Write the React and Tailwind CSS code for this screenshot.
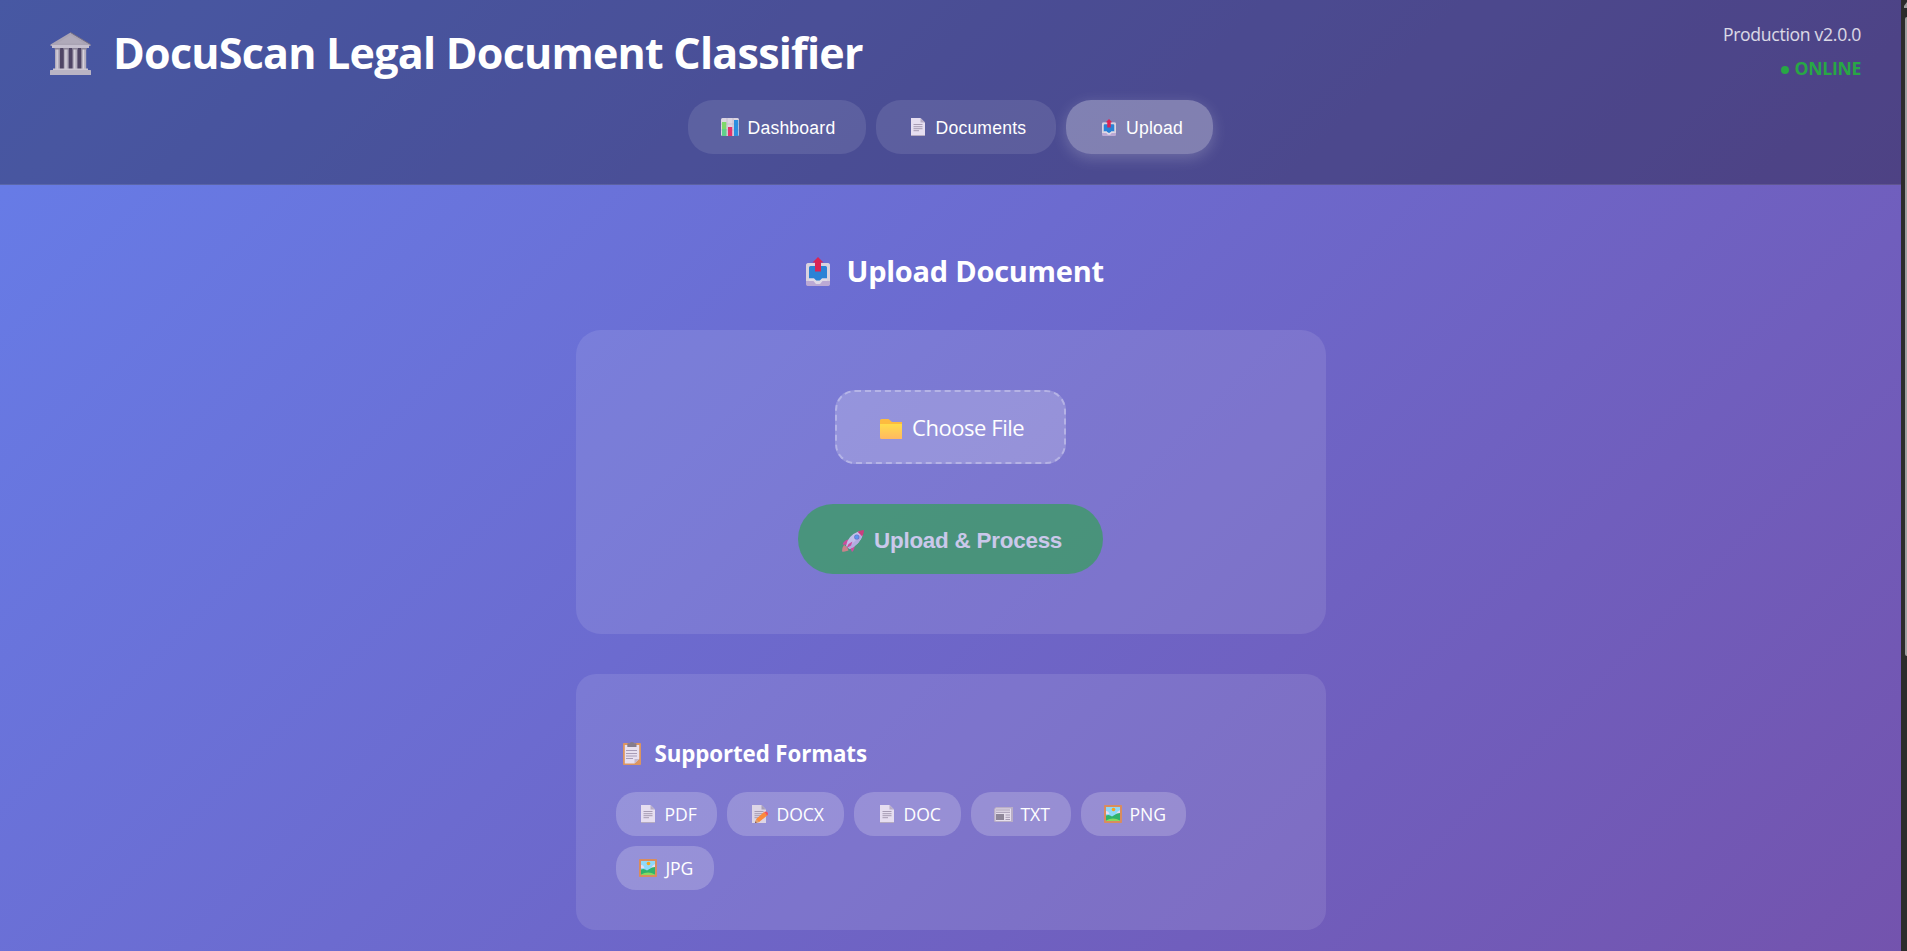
function BankIcon({ className }) {
  return (
    <svg className={className} viewBox="0 0 41 43">
      <path d="M20.500.500L40.500 12.500V14H.500V12.500Z" fill="#aaa4b4" />
      <path d="M20.500.500L40.500 12.500" stroke="#766f82" strokeWidth="1" />
      <path d="M20.500 3L34 11.500H7Z" fill="#b0aaba" />
      <rect x="2" y="13" width="37" height="3" fill="#c5bfce" />
      <rect x="5" y="16" width="31" height="22" fill="#4f4565" />
      {[5, 13.800, 22.600, 31.400].map((x) => (
        <g key={x}>
          <rect x={x} y="16" width="4.800" height="22" fill="#b3adbd" />
          <rect x={x + 1.500} y="16" width="1.300" height="22" fill="#d8d3dd" />
          <rect x={x - 0.400} y="16" width="5.600" height="1.500" fill="#8d8698" />
        </g>
      ))}
      <rect x="3" y="36.500" width="35" height="2" fill="#cbc5d2" />
      <rect x="0" y="38" width="41" height="5" rx=".5" fill="#b9b4c4" />
    </svg>
  );
}

function ChartIcon({ className }) {
  return (
    <svg className={className} viewBox="0 0 18 18">
      <rect width="18" height="18" rx="1.500" fill="#dcd5e2" />
      <path d="M0 6H18M0 12H18M6 0V18M12 0V18" stroke="#bdb4c6" strokeWidth=".6" />
      <rect x="1" y="4" width="4.300" height="14" fill="#7ed86a" />
      <rect x="1" y="11" width="4.300" height="7" fill="#5fd08c" />
      <rect x="7" y="9" width="4.200" height="9" fill="#e5326b" />
      <rect x="13" y="2" width="4.300" height="16" fill="#2b8fe0" />
    </svg>
  );
}

function PageIcon({ className }) {
  return (
    <svg className={className} viewBox="0 0 14 18">
      <path d="M0 0H9.500L14 4.500V18H0Z" fill="#e6def0" />
      <path d="M9.500 0L14 4.500H9.500Z" fill="#b8adc6" />
      <path d="M0 17.500H14" stroke="#b5abc0" />
      <path d="M2.500 6.500H11.500M2.500 8.700H11.500M2.500 10.700H11.500M2.500 12.700H8" stroke="#9f94ad" strokeWidth=".9" />
    </svg>
  );
}

function MemoIcon({ className }) {
  return (
    <svg className={className} viewBox="0 0 16 18">
      <path d="M0 0H9.500L14 4.500V18H0Z" fill="#ddd5e6" />
      <path d="M9.500 0L14 4.500H9.500Z" fill="#a89fb6" />
      <path d="M2.500 6.500H11.500M2.500 8.700H11.500M2.500 10.700H9M2.500 12.700H7" stroke="#9f94ad" strokeWidth=".9" />
      <path d="M3 18L4.200 14L12 7L15.500 10.200L7.200 17Z" fill="#fb8a3c" />
      <path d="M12 7Q15 5.500 16 8.200Q16.200 9.500 15.200 10.400Z" fill="#f4505a" />
      <path d="M3 18L4.200 14L7.200 17Z" fill="#dba476" />
      <path d="M3 18L3.500 16.500L4.700 17.500Z" fill="#5b4054" />
    </svg>
  );
}

function OutboxIcon({ className }) {
  return (
    <svg className={className} viewBox="0 0 24 29">
      <rect x="0" y="6" width="24" height="23" rx="2.500" fill="#b9a5d6" />
      <rect x="0" y="6" width="24" height="20" rx="2.500" fill="#d9d3df" />
      <path d="M4.500 9H19.500Q21 9 21 10.500V21.500H16L14 23.500H10L8 21.500H3V10.500Q3 9 4.500 9Z" fill="#2a82d6" />
      <path d="M0 24H8L10.500 26.500H13.500L16 24H24V26Q24 29 21.500 29H2.500Q0 29 0 26Z" fill="#bba9d4" />
      <path d="M3 21.500H8L10.500 24H13.500L16 21.500H21V24H16.500L14 27H10L7.500 24H3Z" fill="#e0daE6" />
      <path d="M12 0L17.500 5.500H15V14.500H9V5.500H6.500Z" fill="#da2455" />
    </svg>
  );
}

function FolderIcon({ className }) {
  return (
    <svg className={className} viewBox="0 0 22 20">
      <defs>
        <linearGradient id="folder" x1="0" y1="0" x2="0" y2="1">
          <stop offset="0" stopColor="#ffdd4b" />
          <stop offset="1" stopColor="#ffb861" />
        </linearGradient>
      </defs>
      <path d="M0 1.500Q0 0 1.500 0H8.500L12 3H22V18H0Z" fill="#fdbb3f" />
      <path d="M0 5H22V20H1.500Q0 20 0 18.500Z" fill="url(#folder)" />
    </svg>
  );
}

function RocketIcon({ className }) {
  return (
    <svg className={className} viewBox="0 0 22 22">
      <path d="M2 15L5 17L6.500 20.500Q3 22 0 21.500Q0 17.500 2 15Z" fill="#ff8a5c" />
      <path d="M7.500 9.500Q2.500 9.500.500 14.500L6 15ZM12.500 15Q13 19.500 10 22L7.500 16.500Z" fill="#ff2f7d" />
      <path d="M4 16Q5.500 5.500 17.500 1L21 4.500Q17.500 15 7.500 19Z" fill="#f2ecfa" />
      <path d="M6 17.500Q14 11 19.500 3L21 4.500Q17.500 15 7.500 19Z" fill="#d9cdea" />
      <path d="M15.500 1.700Q19 0 22 0Q22 3.500 20.300 6.500Z" fill="#ff1748" />
      <path d="M4.500 18L6.500 14L10.500 11.500L9 15.500Z" fill="#ff2f7d" />
      <circle cx="14.800" cy="7" r="2.600" fill="#5a6cc0" />
      <circle cx="14.800" cy="7" r="1.900" fill="#4aa8ff" />
    </svg>
  );
}

function ClipboardIcon({ className }) {
  return (
    <svg className={className} viewBox="0 0 18 23">
      <rect x="0" y="1" width="18" height="22" rx=".8" fill="#dc9560" />
      <path d="M1.800 3H16.200V17L11.500 21.500H1.800Z" fill="#e8e0f0" />
      <path d="M16.200 17H11.500V21.500Z" fill="#c5bacf" />
      <path d="M3 8.500H14M3 11.500H14M3 14H14M3 16.500H10" stroke="#a094b0" strokeWidth=".9" />
      <path d="M4.300 2Q4.300 1.200 5.500 1.200H7Q7 0 9 0Q11 0 11 1.200H12.500Q13.500 1.200 13.500 2V5H4.300Z" fill="#857b8c" />
    </svg>
  );
}

function NewsIcon({ className }) {
  return (
    <svg className={className} viewBox="0 0 19 15">
      <path d="M2 0H19V15H1.500Q0 15 0 13.500V2Z" fill="#b9aec6" />
      <path d="M1.500 1.500H17V14H1.500Z" fill="#e6dfec" />
      <path d="M2 3H16M2 5.300H16M11.500 8H16M11.500 10.300H16M11.500 12.500H16" stroke="#9f94ad" strokeWidth=".9" />
      <rect x="2" y="7" width="8" height="6" fill="#8f8799" />
    </svg>
  );
}

function PictureIcon({ className }) {
  return (
    <svg className={className} viewBox="0 0 18 18">
      <rect width="18" height="18" rx=".8" fill="#d98c5e" />
      <rect x="2" y="2" width="14" height="14" fill="#8fd9f8" />
      <path d="M2 6Q4.500 5.500 5.500 9H2ZM16 5Q12.500 7 12 9H16Z" fill="#e4dcf0" />
      <path d="M2 10.500Q5 9 8 11.500L13 8.500Q14.500 8 16 8V16H2Z" fill="#2fb36c" />
      <path d="M2 15.500Q9 11.500 16 15.500V16H2Z" fill="#8ad860" />
      <circle cx="9.500" cy="4.500" r="1.800" fill="#f5a51d" />
    </svg>
  );
}

const tabs = [
  { label: "Dashboard", Icon: ChartIcon, icon: "ml-[33px] mr-[8.5px] h-[18px] w-[18px]", box: "w-[178px] bg-white/10" },
  { label: "Documents", Icon: PageIcon, icon: "ml-[35px] mr-[10.5px] h-[18px] w-[14px]", box: "w-[180px] bg-white/10" },
  {
    label: "Upload",
    Icon: OutboxIcon,
    icon: "ml-[36px] mr-[10px] h-[17px] w-[14px]",
    box: "w-[147px] bg-white/30 shadow-[0_4px_15px_rgba(255,255,255,0.2)]",
  },
];

const formats = [
  { label: "PDF", Icon: PageIcon, icon: "ml-[25px] mr-[10px] h-[18px] w-[14px]", box: "w-[101px]" },
  { label: "DOCX", Icon: MemoIcon, icon: "ml-[25px] mr-[9px] h-[18px] w-[16px]", box: "w-[117px]" },
  { label: "DOC", Icon: PageIcon, icon: "ml-[26px] mr-[10px] h-[18px] w-[14px]", box: "w-[107px]" },
  { label: "TXT", Icon: NewsIcon, icon: "ml-[23px] mr-[8px] h-[15px] w-[19px]", box: "w-[100px]" },
  { label: "PNG", Icon: PictureIcon, icon: "ml-[23px] mr-[8px] h-[18px] w-[18px]", box: "w-[105px]" },
  { label: "JPG", Icon: PictureIcon, icon: "ml-[23px] mr-[9px] h-[18px] w-[18px]", box: "w-[98px]" },
];

export default function App() {
  return (
    <div className="flex h-[951px] w-full overflow-hidden font-['Open_Sans','Noto_Sans',sans-serif] text-white">
      <div className="flex min-w-0 flex-1 flex-col bg-[linear-gradient(135deg,#667eea_0%,#764ba2_100%)] bg-[length:1901px_1500px]">
        <header className="flex h-[185px] flex-col border-b border-white/10 bg-black/30 px-10">
          <div className="flex h-[100px] items-start justify-between">
            <h1 className="flex items-start pl-[10px] pt-[23px] text-[43px] font-bold leading-[60px] tracking-[-0.77px]">
              <BankIcon className="mr-[22px] mt-[9px] h-[43px] w-[41px]" />
              <span>DocuScan Legal Document Classifier</span>
            </h1>
            <div className="flex flex-col items-end pt-[17px] text-[17.600px] tracking-[-0.3px]">
              <span className="leading-[34px] text-white/80">Production v2.0.0</span>
              <span className="flex items-center font-bold leading-[34px] text-[#28a745]">
                <span className="mr-[6px] mt-[3px] h-2 w-2 rounded-full bg-[#28a745]" />
                ONLINE
              </span>
            </div>
          </div>
          <nav className="flex justify-center gap-[10px] font-['Liberation_Sans',Arial,sans-serif] text-[17.600px] tracking-[0.2px]">
            {tabs.map(({ label, Icon, icon, box }) => (
              <button key={label} className={`flex h-[54px] items-center rounded-[25px] ${box}`}>
                <Icon className={icon} />
                <span className="pt-[3px]">{label}</span>
              </button>
            ))}
          </nav>
        </header>
        <main className="mx-auto flex w-[750px] flex-col">
          <h2 className="flex h-[145px] items-start pl-[230px] pt-[66px] text-[29px] font-bold leading-[40px] tracking-[-0.25px]">
            <OutboxIcon className="mr-[17px] mt-[6px] h-[29px] w-[24px]" />
            <span>Upload Document</span>
          </h2>
          <section className="flex h-[304px] flex-col items-center rounded-[25px] bg-white/10 pt-[60px]">
            <button className="mb-10 flex h-[74px] w-[231px] items-center rounded-[20px] border-2 border-dashed border-white/30 bg-white/20 pl-[43px] text-[22px] tracking-[-0.45px]">
              <FolderIcon className="mr-[10px] mt-[3px] h-[20px] w-[22px]" />
              <span>Choose File</span>
            </button>
            <button className="flex h-[70px] w-[305px] items-center rounded-[35px] bg-[#28a745] pl-[44px] font-['Liberation_Sans',Arial,sans-serif] text-[22.400px] font-bold tracking-[-0.22px] opacity-60">
              <RocketIcon className="mr-[10px] mt-[3px] h-[22px] w-[22px]" />
              <span className="pt-[3px]">Upload &amp; Process</span>
            </button>
          </section>
          <section className="mt-10 h-[256px] rounded-[20px] bg-white/10 px-10 pt-[60px]">
            <h3 className="flex h-[58px] items-start pl-[7px] text-[22.300px] font-bold leading-[40px] tracking-[-0.1px]">
              <ClipboardIcon className="mr-[14px] mt-[8px] h-[23px] w-[18px]" />
              <span>Supported Formats</span>
            </h3>
            <div className="flex w-[600px] flex-wrap gap-[10px] text-[17.600px] tracking-[-0.1px]">
              {formats.map(({ label, Icon, icon, box }) => (
                <span key={label} className={`flex h-[44px] items-center rounded-[20px] bg-white/20 ${box}`}>
                  <Icon className={icon} />
                  <span className="pt-px">{label}</span>
                </span>
              ))}
            </div>
          </section>
        </main>
      </div>
      <div className="flex w-[6px] shrink-0 flex-col items-end bg-[#2c2c2c] pt-[2px]">
        <svg className="h-[6px] w-[3px]" viewBox="0 0 3 6">
          <path d="M3 0V6H0V4Z" fill="#9f9f9f" />
        </svg>
        <div className="mt-[9px] h-[639px] w-[2px] rounded-l-[2px] bg-[#9f9f9f]" />
      </div>
    </div>
  );
}
